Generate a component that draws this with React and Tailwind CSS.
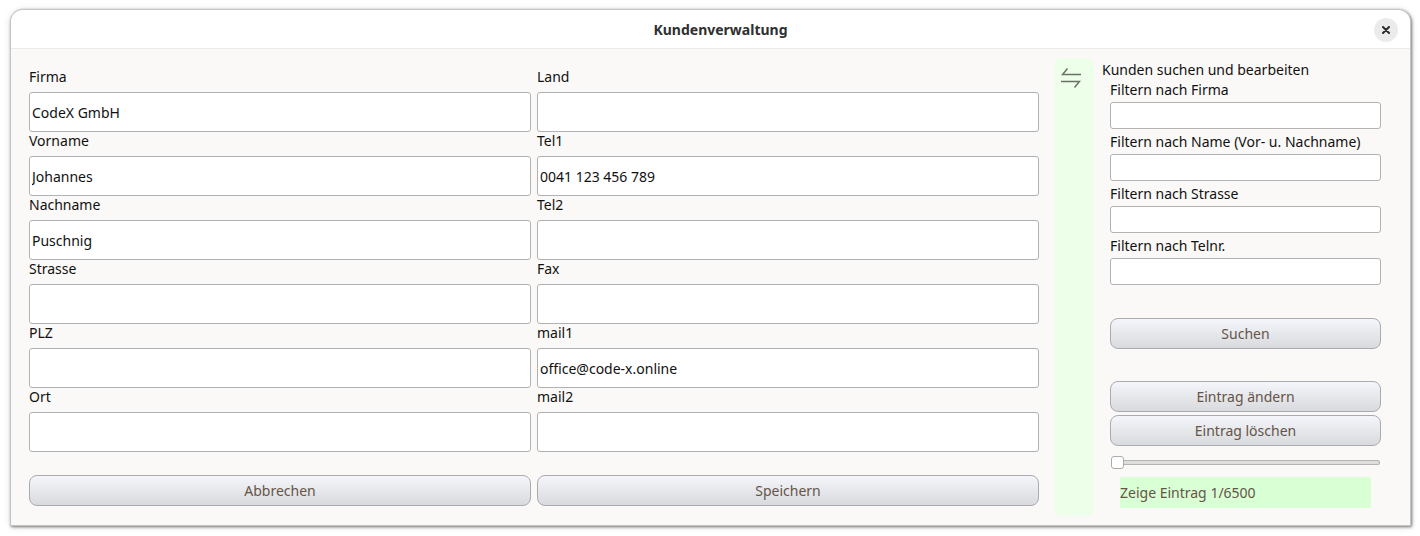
import React, { useState } from "react";

const leftFields = [
  { id: "firma", label: "Firma", value: "CodeX GmbH" },
  { id: "vorname", label: "Vorname", value: "Johannes" },
  { id: "nachname", label: "Nachname", value: "Puschnig" },
  { id: "strasse", label: "Strasse", value: "" },
  { id: "plz", label: "PLZ", value: "" },
  { id: "ort", label: "Ort", value: "" },
];

const rightFields = [
  { id: "land", label: "Land", value: "" },
  { id: "tel1", label: "Tel1", value: "0041 123 456 789" },
  { id: "tel2", label: "Tel2", value: "" },
  { id: "fax", label: "Fax", value: "" },
  { id: "mail1", label: "mail1", value: "office@code-x.online" },
  { id: "mail2", label: "mail2", value: "" },
];

const filters = [
  { id: "filter-firma", label: "Filtern nach Firma" },
  { id: "filter-name", label: "Filtern nach Name (Vor- u. Nachname)" },
  { id: "filter-strasse", label: "Filtern nach Strasse" },
  { id: "filter-tel", label: "Filtern nach Telnr." },
];

const Button = ({ children }) => (
  <button
    type="button"
    className="block h-[31px] w-full rounded-lg border border-[#a9abae] bg-linear-to-b from-[#f4f6fb] to-[#d9dadd] text-center text-[#655448]"
  >
    {children}
  </button>
);

const FieldColumn = ({ fields, action }) => (
  <div className="min-w-0 flex-1">
    {fields.map((field) => (
      <div key={field.id}>
        <label htmlFor={field.id} className="block h-6 leading-[18px]">
          {field.label}
        </label>
        <input
          id={field.id}
          type="text"
          defaultValue={field.value}
          className="block h-10 w-full rounded-[3px] border border-[#b0b2b4] bg-white px-0.5"
        />
      </div>
    ))}
    <div className="mt-[23px]">
      <Button>{action}</Button>
    </div>
  </div>
);

const SearchPanel = () => {
  const [entry, setEntry] = useState(1);

  return (
    <div className="w-[308px] shrink-0 pt-3 pr-[29px] pb-2">
      <h2 className="h-4 leading-[18px]">Kunden suchen und bearbeiten</h2>
      <div className="pl-2">
        {filters.map((filter) => (
          <div key={filter.id}>
            <label
              htmlFor={filter.id}
              className="block whitespace-nowrap leading-[25px]"
            >
              {filter.label}
            </label>
            <input
              id={filter.id}
              type="text"
              className="block h-[27px] w-full rounded-[3px] border border-[#b0b2b4] bg-white px-0.5"
            />
          </div>
        ))}
        <div className="mt-[33px]">
          <Button>Suchen</Button>
        </div>
        <div className="mt-8 space-y-[3px]">
          <Button>Eintrag ändern</Button>
          <Button>Eintrag löschen</Button>
        </div>
        <div className="mt-2.5 px-px">
          <input
            type="range"
            aria-label="Eintrag"
            min="1"
            max="6500"
            value={entry}
            onChange={(e) => setEntry(Number(e.target.value))}
            className="block h-[13px] w-full appearance-none bg-transparent [&::-webkit-slider-runnable-track]:h-[5px] [&::-webkit-slider-runnable-track]:rounded-[3px] [&::-webkit-slider-runnable-track]:bg-[#dededd] [&::-webkit-slider-runnable-track]:ring-1 [&::-webkit-slider-runnable-track]:ring-[#b4b4b3] [&::-webkit-slider-runnable-track]:ring-inset [&::-webkit-slider-thumb]:-mt-1 [&::-webkit-slider-thumb]:size-[13px] [&::-webkit-slider-thumb]:appearance-none [&::-webkit-slider-thumb]:rounded-[3px] [&::-webkit-slider-thumb]:border [&::-webkit-slider-thumb]:border-[#a9abae] [&::-webkit-slider-thumb]:bg-white"
          />
        </div>
        <p className="mx-2.5 mt-2 bg-[#d9ffd5] leading-[31px] text-[#655448]">
          Zeige Eintrag {entry}/6500
        </p>
      </div>
    </div>
  );
};

export default function App() {
  return (
    <div className="bg-white pt-2.5 pr-2.5 pb-[11px] pl-[11px] font-['Noto_Sans',sans-serif] text-sm text-[#111111]">
      <div className="overflow-hidden rounded-t-xl bg-[#faf9f7] shadow-[0_0_0_1px_#c4c4c4,1px_1px_3px_1px_rgba(0,0,0,0.5),0_1px_9px_rgba(0,0,0,0.14)]">
        <header className="grid h-[39px] grid-cols-[1fr_auto_1fr] items-center border-b border-[#ebeae8] bg-white px-3 pt-0.5">
          <h1 className="col-start-2 pl-5 font-bold text-[#2f2f2f]">
            Kundenverwaltung
          </h1>
          <button
            type="button"
            aria-label="Schliessen"
            className="flex size-6 items-center justify-center justify-self-end rounded-full bg-[#ebebeb]"
          >
            <svg
              className="size-2"
              viewBox="0 0 8 8"
              fill="none"
              stroke="#2b2b2b"
              strokeWidth="2"
              strokeLinecap="round"
            >
              <path d="M1 1l6 6M7 1l-6 6" />
            </svg>
          </button>
        </header>

        <div className="flex pb-[9px]">
          <form className="flex min-w-0 flex-1 gap-1.5 pt-[19px] pl-[18px]">
            <FieldColumn fields={leftFields} action="Abbrechen" />
            <FieldColumn fields={rightFields} action="Speichern" />
          </form>
          <div className="mt-[9px] mr-2 ml-[15px] w-10 shrink-0 rounded-lg bg-[#edffe8]">
            <button
              type="button"
              aria-label="Suche ein- oder ausblenden"
              className="mt-2 ml-[7px] block"
            >
              <svg
                className="h-6 w-5"
                viewBox="0 0 20 24"
                fill="none"
                stroke="#6b6f69"
                strokeWidth="1.5"
              >
                <path d="M20 8.500H1.500L6.500 2.500" />
                <path d="M0 15.500H18.500L13.500 21.500" />
              </svg>
            </button>
          </div>
          <SearchPanel />
        </div>
      </div>
    </div>
  );
}
